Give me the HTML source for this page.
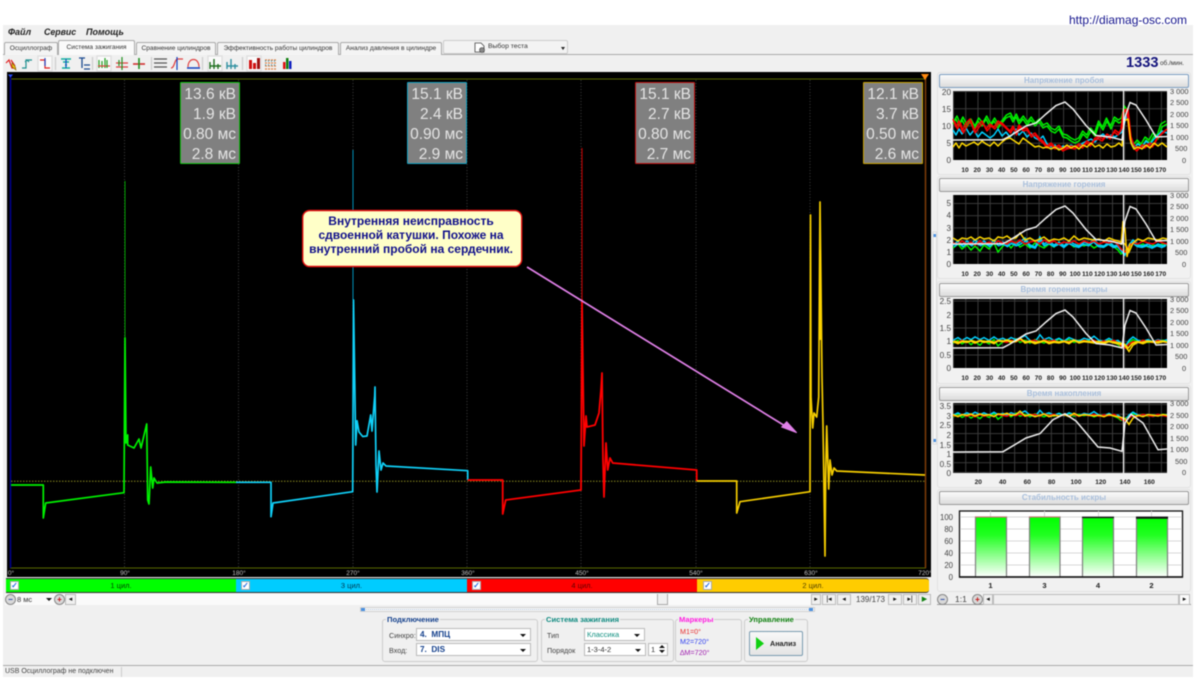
<!DOCTYPE html>
<html lang="ru"><head><meta charset="utf-8"><title>Diamag</title>
<style>
html,body{margin:0;padding:0;background:#fff;width:1200px;height:680px;overflow:hidden}
#w{position:relative;width:1200px;height:680px;overflow:hidden;filter:blur(.5px);font-family:"Liberation Sans",sans-serif;color:#333}
.a{position:absolute;white-space:nowrap;box-sizing:border-box}
.tab{top:42px;height:13px;background:#f4f4f4;border:1px solid #aaa;border-bottom:none;font-size:6.6px;line-height:12px;text-align:center;border-radius:2px 2px 0 0;color:#333}
.hd{left:939px;width:250px;height:14px;background:linear-gradient(#fbfbfb,#dcdcdc);border:1px solid #999;border-radius:2px;text-align:center;font-size:8px;font-weight:bold;line-height:12px;color:#a9bfdc}
.pn{left:937px;width:254px;background:#f1f1f1;border:1px solid #e2e2e2;border-radius:3px}
.grp{top:619px;height:43px;border:1px solid #ccc;border-radius:3px}
.gt{top:615px;font-size:7.6px;font-weight:bold;background:#f0f0f0;padding:0 1px;line-height:9px}
.cb{background:#fff;border:1px solid #bbb;height:13px;font-size:7.5px;line-height:11px;padding-left:2px}
.cb i{position:absolute;right:4px;top:4.5px;width:0;height:0;border:3px solid transparent;border-top:3px solid #111;border-bottom:none}
.lb{font-size:7.2px;color:#444}
.st{top:578px;height:15px;border-top:1px solid #333;border-bottom:1px solid #333;font-size:7.5px;line-height:13px;text-align:center}
.ck{top:581px;width:9px;height:9px;background:#fff;border:1px solid #aaa;color:#2a6fe0;font-size:8px;line-height:7px;text-align:center;font-weight:bold}
.btn{top:594px;height:11px;background:#f0f0f0;border:1px solid #bbb;font-size:7px;line-height:9px;text-align:center;color:#111}
.rd{background:#d8d8d8;border:1px solid #888;border-radius:6px;font-weight:bold;font-size:8px}
.info{top:82px;width:60px;height:82px;background:#808080;border:1px solid;border-radius:1px;color:#e4e4e4;font-size:15.5px;line-height:20px;text-align:right;padding:2px 3px 0 0}
</style></head><body><div id="w">

<div class="a" style="left:3px;top:25px;width:1190px;height:652px;background:#f0f0f0"></div>
<div class="a" style="left:1069px;top:13px;font-size:12px;color:#14148c">http://diamag-osc.com</div>
<div class="a" style="left:8px;top:27px;font-size:9px;font-weight:bold;font-style:italic;color:#222">Файл</div>
<div class="a" style="left:44px;top:27px;font-size:8.8px;font-weight:bold;font-style:italic;color:#222">Сервис</div>
<div class="a" style="left:86px;top:27px;font-size:9px;font-weight:bold;font-style:italic;color:#222">Помощь</div>

<div class="a" style="left:3px;top:54px;width:1190px;height:1px;background:#aaa"></div>
<div class="a tab" style="left:4px;width:54px">Осциллограф</div>
<div class="a tab" style="left:58px;width:77px;top:40px;height:15px;background:#fafafa;line-height:13px">Система зажигания</div>
<div class="a tab" style="left:136px;width:80px">Сравнение цилиндров</div>
<div class="a tab" style="left:217px;width:122px">Эффективность работы цилиндров</div>
<div class="a tab" style="left:340px;width:102px">Анализ давления в цилиндре</div>
<div class="a" style="left:443px;top:40px;width:125px;height:14px;background:#f3f3f3;border:1px solid #ccc;border-radius:2px"></div>
<div class="a" style="left:488px;top:43px;font-size:6.8px;color:#333">Выбор теста</div>
<div class="a" style="left:561px;top:47px;width:0;height:0;border:2px solid transparent;border-top:3px solid #222"></div>

<div class="a" style="left:1126px;top:54px;font-size:14.6px;font-weight:bold;color:#14147c;line-height:18px">1333</div>
<div class="a" style="left:1160px;top:60px;font-size:6.4px;color:#333">об./мин.</div>

<svg class="a" style="left:0;top:0" width="1200" height="680" viewBox="0 0 1200 680">
<defs>
<pattern id="g1" width="12.23" height="17.25" patternUnits="userSpaceOnUse"><path d="M.5 0V18M0 .5H13" stroke="#3a3a3a" fill="none"/></pattern>
<pattern id="g2" width="12.23" height="12.2" y="8" patternUnits="userSpaceOnUse"><path d="M.5 0V13M0 .5H13" stroke="#3a3a3a" fill="none"/></pattern>
<pattern id="g3" width="12.23" height="13.5" y="1.5" patternUnits="userSpaceOnUse"><path d="M.5 0V14M0 .5H13" stroke="#3a3a3a" fill="none"/></pattern>
<pattern id="g4" width="12.23" height="9.7" y="1" patternUnits="userSpaceOnUse"><path d="M.5 0V10M0 .5H13" stroke="#3a3a3a" fill="none"/></pattern>
<linearGradient id="bar" x1="0" y1="0" x2="0" y2="1"><stop offset="0" stop-color="#00ff00"/><stop offset=".3" stop-color="#20ff20"/><stop offset="1" stop-color="#ffffff"/></linearGradient>
<polyline id="rpm" fill="none" stroke="#eee" stroke-width="1.5" points="0,49 50,48.7 57,45 73,35 83,32 93,23 103,14.5 112,11 120,18 133,34.5 143,44.5 157,46 169,49 172,26 177,11.5 183,14 193,29 203,46 214,45.5"/>
<polyline id="n1" fill="none" stroke="#00f000" stroke-width="1.5" vector-effect="non-scaling-stroke" points="0,3 5,-1 9,4 14,0 18,5 22,1 27,6 31,0 36,4 41,-2 45,7 50,1 54,-2 58,3 63,-3 67,2 72,-1 77,3 82,-2 87,1 91,3 96,-1 101,2 106,-3 111,1 116,-2 121,2 126,-1 131,1 136,-1 141,3 146,0 151,2 156,-1 161,2 165,5 168,9 172,6 176,2 180,-2 185,1 190,-1 195,2 200,0 205,1 210,-1 214,0"/>
<polyline id="n2" fill="none" stroke="#f80000" stroke-width="1.5" vector-effect="non-scaling-stroke" points="0,1 5,2 9,-1 14,2 18,0 22,3 27,-1 31,2 36,0 41,2 45,-1 50,1 54,2 58,-1 63,1 67,-2 72,2 77,0 82,-1 87,2 91,-2 96,1 101,-1 106,2 111,0 116,1 121,-1 126,2 131,-1 136,1 141,-1 146,2 151,0 156,1 161,-1 165,3 168,7 172,10 176,4 180,1 185,2 190,-1 195,1 200,2 205,-1 210,1 214,2"/>
<polyline id="n3" fill="none" stroke="#00d0ff" stroke-width="1.5" vector-effect="non-scaling-stroke" points="0,2 5,-2 9,2 14,-2 18,1 22,-3 27,1 31,-2 36,2 41,-3 45,1 50,-1 54,2 58,-2 63,1 67,-1 72,-5 77,2 82,4 87,-6 91,1 96,-2 101,2 106,-1 111,3 116,-2 121,1 126,3 131,-1 136,1 141,-4 146,2 151,3 156,-1 161,3 165,2 168,6 172,12 176,2 180,-3 185,2 190,3 195,1 200,4 205,1 210,3 214,1"/>
<polyline id="n4" fill="none" stroke="#ffd800" stroke-width="1.5" vector-effect="non-scaling-stroke" points="0,-2 5,1 9,-2 14,-1 18,-3 22,0 27,-3 31,-1 36,-2 41,1 45,-3 50,-2 54,-4 58,-1 63,-2 67,-7 72,0 77,-2 82,1 87,-1 91,-3 96,1 101,-1 106,0 111,-2 116,1 121,-4 126,0 131,-2 136,-1 141,0 146,-1 151,1 156,-2 161,0 165,1 168,2 172,4 176,12 180,3 185,-1 190,1 195,-2 200,-1 205,0 210,-2 214,-1"/>
<polyline id="c1g" fill="none" stroke="#00f000" stroke-width="1.5" stroke-linejoin="round" points="0,33 3,28 6,35 9,29 13,37 17,31 21,38 25,30 29,35 33,28 37,36 41,30 45,37 49,32 53,27 57,25 60,31 63,26 66,33 70,28 74,34 78,29 82,35 86,31 90,37 94,35 98,40 102,42 106,38 110,46 114,47 118,50 122,52 126,50 130,43 134,47 138,40 142,45 146,33 150,39 154,30 158,38 162,29 166,32 169,30 172,18 175,22 178,48 181,57 185,52 189,56 193,49 197,52 201,45 205,48 209,36 214,33"/>
<polyline id="c1b" fill="none" stroke="#00d0ff" stroke-width="1.5" stroke-linejoin="round" points="0,39 3,44 6,38 9,43 13,37 17,44 21,39 25,46 29,41 33,44 37,47 41,44 45,38 49,45 53,41 57,46 60,43 63,38 66,44 70,40 74,46 78,42 82,47 86,49 90,45 94,53 98,56 102,54 106,58 110,55 114,57 118,54 122,56 126,55 130,52 134,50 138,48 142,51 146,46 150,43 154,47 158,44 162,46 166,43 169,41 172,30 175,22 178,50 181,56 185,53 189,56 193,50 197,53 201,48 205,44 209,40 214,42"/>
<polyline id="c1r" fill="none" stroke="#f80000" stroke-width="1.5" stroke-linejoin="round" points="0,28 3,36 6,30 9,40 13,32 17,28 21,40 25,34 29,30 33,38 37,33 41,36 45,30 49,32 53,36 57,40 60,35 63,42 66,34 70,38 74,37 78,44 82,42 86,47 90,50 94,55 98,52 102,56 106,54 110,58 114,56 118,55 122,56 126,53 130,55 134,50 138,53 142,47 146,46 150,48 154,43 158,46 162,39 166,42 169,37 171,19 175,18 178,46 181,54 185,58 189,54 193,55 197,52 201,54 205,46 209,42 214,38"/>
<polyline id="c1y" fill="none" stroke="#ffd800" stroke-width="1.5" stroke-linejoin="round" points="0,56 3,52 6,57 9,52 13,55 17,53 21,51 25,54 29,50 33,53 37,55 41,51 45,55 49,51 53,48 57,47 60,49 63,51 66,53 70,47 74,50 78,53 82,56 86,55 90,57 94,56 98,58 102,56 106,59 110,57 114,54 118,57 122,55 126,58 130,54 134,56 138,52 142,56 146,54 150,57 154,53 158,56 162,55 166,52 169,55 171,30 175,28 178,52 181,58 185,56 189,58 193,54 197,57 201,52 205,55 209,52 214,56"/>
</defs>

<!-- scope -->
<rect x="7" y="72" width="924" height="505" fill="#000"/>
<g stroke="#3d3d3d" stroke-dasharray="1 2"><path d="M124.5 80V568M238.5 80V568M353 80V568M467 80V568M581 80V568M696 80V568M810 80V568"/></g>
<path d="M10 79H926M10 568H926" stroke="#5a6a00" fill="none"/>
<path d="M10.5 76V568" stroke="#00008c" stroke-width="1.6"/>
<path d="M925.5 78V568" stroke="#7a3a08" stroke-width="1.6"/>
<path d="M8 74.5h5l-2.5 3z" fill="#2a50ff"/>
<path d="M921 74h8l-4 6z" fill="#ff8a10"/>
<path d="M11 481.3H925" stroke="#8a8a20" stroke-dasharray="1.5 1.5"/>

<g fill="none" stroke-linejoin="round">
<path d="M125 181V340" stroke="#00a000" stroke-width="1"/>
<path d="M11 485H43.3V518L45.7 503L124 492.7L125 338L126 443L127.7 435V445L134 448L139 439L141 448L146.7 424L147.7 500L149 504L150.7 467L152.7 488L154 478L157 483L166 482L236 482.3" stroke="#00f000" stroke-width="1.7"/>
<path d="M353 150V300" stroke="#0090b8" stroke-width="1"/>
<path d="M236 482.3H271V516.7L273 503L352.7 491.7L353.5 300L355.7 445L357 420.7L359 432L362.7 436.5L367 436L370.7 415L372 431L374.7 396L375 387L376 465L377 492L379 451L381 470L383 463L386 466L467.7 470.7V480" stroke="#10d0f8" stroke-width="1.7"/>
<path d="M582 148V300" stroke="#c00000" stroke-width="1.1"/>
<path d="M467.7 480H502.7V514L505.7 500L581 490L582 300L584 446L586 416L587 427L595 425L599 413L601 390L602 373L603 460L604 497L606 443L607.7 470L610 458L612.7 463L696.7 470V481" stroke="#ff0000" stroke-width="1.8"/>
<path d="M696.7 481H736.7V513L740 501.7L810 491.7L810.5 215L811 397L812.7 428L814 413L816.7 417L818.7 397L820 202L822 377L823 425L825 556L825.7 470L826.7 426L828.7 489L830 460L832 475L834 468L836.7 471L925 475" stroke="#f4cc00" stroke-width="1.7"/>
<path d="M820 250V340M810.5 350V400" stroke="#ffd400" stroke-width="2"/>
</g>

<path d="M527 267L790 429" stroke="#e080e8" stroke-width="1.7"/>
<path d="M796.7 432.7L781.7 427L786.7 421.7z" fill="#e080e8" stroke="#e080e8"/>

<rect x="302.7" y="210.5" width="219" height="56" rx="7" fill="#ffffc8" stroke="#e41010" stroke-width="1.4"/>
<g font-family="Liberation Sans" font-size="12" font-weight="bold" fill="#10108a" text-anchor="middle">
<text x="411" y="225">Внутренняя неисправность</text>
<text x="411" y="239">сдвоенной катушки. Похоже на</text>
<text x="411" y="253">внутренний пробой на сердечник.</text>
</g>

<g font-family="Liberation Sans" font-size="6.5" fill="#c0c0c0" text-anchor="middle">
<text x="11" y="575">0°</text><text x="125" y="575">90°</text><text x="239" y="575">180°</text><text x="353" y="575">270°</text><text x="468" y="575">360°</text><text x="582" y="575">450°</text><text x="696" y="575">540°</text><text x="811" y="575">630°</text><text x="925" y="575">720°</text>
</g>

<!-- toolbar icons -->
<g fill="none" stroke-width="1.2">
<rect x="38" y="56" width="14" height="15" fill="#fafafa" stroke="#ddd"/>
<rect x="97" y="56" width="14" height="15" fill="#fafafa" stroke="#ddd"/>
<rect x="208" y="56" width="14" height="15" fill="#fafafa" stroke="#ddd"/>
<rect x="247" y="56" width="14" height="15" fill="#fafafa" stroke="#ddd"/>
<path d="M55.5 57V70M92.5 57V70M151.5 57V70M202.5 57V70M242.5 57V70" stroke="#ccc"/>
<path d="M6 63L9 60L12 68H16M11 60L15 66" stroke="#e02020"/><path d="M12 63l3 3 1 4-4-3z" fill="#e8c010" stroke="#806000" stroke-width=".6"/>
<path d="M22 68H26V60H32M27 60l-2 2M27 60l2 2" stroke="#209090"/>
<path d="M40 60H45V68H50" stroke="#e02020"/><path d="M45 58V66" stroke="#2040c0"/>
<path d="M61 59H71M63 62H69M65 65H67M62 68H70" stroke="#10b0a0" stroke-width="1.6"/><path d="M66 59V68" stroke="#1050c0"/>
<path d="M79 58H85M82 58V68M84 65H90M84 69H90" stroke="#1a4a90" stroke-width="1.3"/>
<path d="M99 68V60M102 68V61M105 68V58" stroke="#20a020"/><path d="M98 66H110" stroke="#e04040"/><path d="M107 68V60" stroke="#20a020"/>
<path d="M116 63H128M116 67H128" stroke="#e04040"/><path d="M122 57V70M119 60V66" stroke="#209020"/>
<path d="M133 64H145" stroke="#d03030" stroke-width="1.6"/><path d="M139 58V69" stroke="#209020" stroke-width="1.6"/>
<path d="M154 59H167M154 63H167M154 67H167" stroke="#555"/>
<path d="M171 68C175 68 174 59 178 59H183" stroke="#e04040"/><path d="M177 57V70" stroke="#1040c0"/>
<path d="M188 67C188 57 199 57 199 67" stroke="#e04040"/><path d="M187 68H200" stroke="#1040c0" stroke-width="1.5"/>
<path d="M210 69V62M214 69V59M218 69V64M210 66H221" stroke="#207020" stroke-width="1.4"/>
<path d="M227 69V62M231 69V59M235 69V64M227 66H238" stroke="#3090a0" stroke-width="1.4"/>
<rect x="249" y="60" width="3" height="9" fill="#d01010"/><rect x="253" y="63" width="3" height="6" fill="#d01010"/><rect x="257" y="58" width="3" height="11" fill="#a01010"/>
<path d="M265 60H277M265 63H277M265 66H277M265 69H277" stroke="#e08040" stroke-dasharray="2 1"/><path d="M265 61H277M265 65H277" stroke="#3090b0" stroke-dasharray="1 2"/>
<rect x="283" y="62" width="2.5" height="7" fill="#e01010"/><rect x="286" y="58" width="2.5" height="11" fill="#108010"/><rect x="289" y="61" width="2.5" height="8" fill="#1020c0"/>
<path d="M475 43h6l3 3v6h-9z" fill="#fff" stroke="#444" stroke-width=".8"/><circle cx="482" cy="50" r="2.5" fill="#888" stroke="#444" stroke-width=".6"/>
</g>
</svg>

<div class="a info" style="left:180px;border-color:#10c010">13.6 кВ<br>1.9 кВ<br>0.80 мс<br>2.8 мс</div>
<div class="a info" style="left:407px;border-color:#10a0c0">15.1 кВ<br>2.4 кВ<br>0.90 мс<br>2.9 мс</div>
<div class="a info" style="left:635px;border-color:#c01010">15.1 кВ<br>2.7 кВ<br>0.80 мс<br>2.7 мс</div>
<div class="a info" style="left:863px;border-color:#c8a000">12.1 кВ<br>3.7 кВ<br>0.50 мс<br>2.6 мс</div>

<!-- strips -->
<div class="a st" style="left:6px;width:230px;background:#00ff00;color:#004400">1 цил.</div>
<div class="a st" style="left:236px;width:231px;background:#00ccff;color:#003850">3 цил.</div>
<div class="a st" style="left:467px;width:230px;background:#ff0000;color:#600000">4 цил.</div>
<div class="a st" style="left:697px;width:232px;background:#ffcc00;color:#504000;border-radius:0 3px 3px 0">2 цил.</div>
<div class="a ck" style="left:10px">✓</div><div class="a ck" style="left:241px">✓</div><div class="a ck" style="left:472px">✓</div><div class="a ck" style="left:703px">✓</div>

<!-- scope scrollbar -->
<div class="a" style="left:5px;top:594px;width:810px;height:11px;background:#fafafa"></div>
<div class="a btn rd" style="left:5px;width:11px;color:#2040a0">−</div>
<div class="a" style="left:17px;top:594px;font-size:7.5px;line-height:11px;color:#333">8 мс</div>
<div class="a" style="left:46px;top:598px;width:0;height:0;border:3px solid transparent;border-top:3px solid #111;border-bottom:none"></div>
<div class="a btn rd" style="left:54px;width:11px;color:#c01010">+</div>
<div class="a btn" style="left:65px;width:11px">◂</div>
<div class="a" style="left:657px;top:594px;width:11px;height:11px;background:#f0f0f0;border:1px solid #aaa;border-top:none"></div>
<div class="a btn" style="left:811px;width:10px">▸</div>
<div class="a btn" style="left:822px;width:14px">|◂</div>
<div class="a btn" style="left:837px;width:14px">◂</div>
<div class="a" style="left:856px;top:594px;font-size:8px;line-height:11px;color:#444">139/173</div>
<div class="a btn" style="left:888px;width:14px">▸</div>
<div class="a btn" style="left:903px;width:14px">▸|</div>
<div class="a btn" style="left:918px;width:13px;color:#108010">▶</div>

<!-- right panels -->
<div class="a pn" style="top:72px;height:103px"></div>
<div class="a pn" style="top:176px;height:103px"></div>
<div class="a pn" style="top:281px;height:103px"></div>
<div class="a pn" style="top:385px;height:103px"></div>
<div class="a pn" style="top:489px;height:103px"></div>
<div class="a hd" style="top:74px;border-color:#7a9cc0">Напряжение пробоя</div>
<div class="a hd" style="top:178px">Напряжение горения</div>
<div class="a hd" style="top:283px">Время горения искры</div>
<div class="a hd" style="top:387px">Время накопления</div>
<div class="a hd" style="top:491px">Стабильность искры</div>

<svg class="a" style="left:0;top:0" width="1200" height="680" viewBox="0 0 1200 680">
<!-- chart 1 -->
<g transform="translate(953,91)"><rect width="214" height="69" fill="#000"/><rect width="214" height="69" fill="url(#g1)"/>
<use href="#c1g"/><use href="#c1g" transform="translate(1,-3) scale(.99,1)"/>
<use href="#c1b"/>
<use href="#c1r"/><use href="#c1r" transform="translate(1.5,2) scale(.985,1)"/>
<use href="#c1y"/>
<use href="#rpm"/><path d="M170.5 0V69" stroke="#fff" stroke-width="1.2"/></g>
<!-- chart 2 -->
<g transform="translate(953,195)"><rect width="214" height="69" fill="#000"/><rect width="214" height="69" fill="url(#g2)"/>
<use href="#n1" transform="translate(0,50)"/><use href="#n3" transform="translate(0,48)"/><use href="#n3" transform="translate(1,50) scale(.99,.8)"/><use href="#n2" transform="translate(0,47)"/><use href="#n4" transform="translate(0,45)"/>
<path d="M168 50L170 26L172 34L174 62L177 48" fill="none" stroke="#ffd000" stroke-width="1.4"/>
<use href="#rpm"/><path d="M170.5 0V69" stroke="#fff" stroke-width="1.2"/></g>
<!-- chart 3 -->
<g transform="translate(953,299)"><rect width="214" height="69" fill="#000"/><rect width="214" height="69" fill="url(#g3)"/>
<use href="#n1" transform="translate(0,42) scale(1,.7)"/><use href="#n3" transform="translate(0,40) scale(1,.7)"/><use href="#n2" transform="translate(0,42) scale(1,.7)"/><use href="#n4" transform="translate(0,44) scale(1,.7)"/><use href="#n4" transform="translate(1,43) scale(.99,.5)"/>
<use href="#rpm"/><path d="M170.5 0V69" stroke="#fff" stroke-width="1.2"/></g>
<!-- chart 4 -->
<g transform="translate(953,403)"><rect width="214" height="70" fill="#000"/><rect width="214" height="70" fill="url(#g4)"/>
<use href="#n1" transform="translate(0,12) scale(1,.6)"/><use href="#n3" transform="translate(0,11) scale(1,.6)"/><use href="#n2" transform="translate(0,12) scale(1,.6)"/><use href="#n4" transform="translate(0,13) scale(1,.7)"/>
<polyline fill="none" stroke="#eee" stroke-width="1.5" points="0,49 50,48.7 73,35 87,30.6 100,16.7 112,10.7 123,18 145,44 157,45 169,48.3 172,20 178,11.3 190,20 205,46.7 214,46"/>
<path d="M170.5 0V70" stroke="#fff" stroke-width="1.2"/></g>

<g font-family="Liberation Sans" font-size="8.2" fill="#444" text-anchor="end">
<text x="951" y="95">20</text><text x="951" y="112">15</text><text x="951" y="129">10</text><text x="951" y="146">5</text><text x="951" y="163">0</text>
<text x="951" y="206">5</text><text x="951" y="218">4</text><text x="951" y="231">3</text><text x="951" y="243">2</text><text x="951" y="255">1</text><text x="951" y="267">0</text>
<text x="951" y="304">2.5</text><text x="951" y="318">2</text><text x="951" y="331">1.5</text><text x="951" y="344">1</text><text x="951" y="358">0.5</text><text x="951" y="371">0</text>
<text x="951" y="409">3.5</text><text x="951" y="419">3</text><text x="951" y="428">2.5</text><text x="951" y="438">2</text><text x="951" y="448">1.5</text><text x="951" y="457">1</text><text x="951" y="467">0.5</text><text x="951" y="476">0</text>
</g>
<g font-family="Liberation Sans" font-size="7.4" fill="#444">
<text x="1170" y="94">3 000</text><text x="1170" y="105">2 500</text><text x="1170" y="117">2 000</text><text x="1170" y="128">1 500</text><text x="1170" y="140">1 000</text><text x="1175" y="151">500</text><text x="1182" y="163">0</text>
<text x="1170" y="198">3 000</text><text x="1170" y="209">2 500</text><text x="1170" y="221">2 000</text><text x="1170" y="232">1 500</text><text x="1170" y="244">1 000</text><text x="1175" y="255">500</text><text x="1182" y="267">0</text>
<text x="1170" y="302">3 000</text><text x="1170" y="313">2 500</text><text x="1170" y="325">2 000</text><text x="1170" y="336">1 500</text><text x="1170" y="348">1 000</text><text x="1175" y="359">500</text><text x="1182" y="371">0</text>
<text x="1170" y="406">3 000</text><text x="1170" y="418">2 500</text><text x="1170" y="429">2 000</text><text x="1170" y="441">1 500</text><text x="1170" y="452">1 000</text><text x="1175" y="464">500</text><text x="1182" y="475">0</text>
</g>
<g font-family="Liberation Sans" font-size="6.6" font-weight="bold" fill="#222" text-anchor="middle">
<text x="965" y="172">10</text><text x="977.2" y="172">20</text><text x="989.5" y="172">30</text><text x="1001.7" y="172">40</text><text x="1013.9" y="172">50</text><text x="1026.2" y="172">60</text><text x="1038.4" y="172">70</text><text x="1050.6" y="172">80</text><text x="1062.8" y="172">90</text><text x="1075.1" y="172">100</text><text x="1087.3" y="172">110</text><text x="1099.5" y="172">120</text><text x="1111.8" y="172">130</text><text x="1124" y="172">140</text><text x="1136.2" y="172">150</text><text x="1148.5" y="172">160</text><text x="1160.7" y="172">170</text>
<text x="965" y="276">10</text><text x="977.2" y="276">20</text><text x="989.5" y="276">30</text><text x="1001.7" y="276">40</text><text x="1013.9" y="276">50</text><text x="1026.2" y="276">60</text><text x="1038.4" y="276">70</text><text x="1050.6" y="276">80</text><text x="1062.8" y="276">90</text><text x="1075.1" y="276">100</text><text x="1087.3" y="276">110</text><text x="1099.5" y="276">120</text><text x="1111.8" y="276">130</text><text x="1124" y="276">140</text><text x="1136.2" y="276">150</text><text x="1148.5" y="276">160</text><text x="1160.7" y="276">170</text>
<text x="965" y="380">10</text><text x="977.2" y="380">20</text><text x="989.5" y="380">30</text><text x="1001.7" y="380">40</text><text x="1013.9" y="380">50</text><text x="1026.2" y="380">60</text><text x="1038.4" y="380">70</text><text x="1050.6" y="380">80</text><text x="1062.8" y="380">90</text><text x="1075.1" y="380">100</text><text x="1087.3" y="380">110</text><text x="1099.5" y="380">120</text><text x="1111.8" y="380">130</text><text x="1124" y="380">140</text><text x="1136.2" y="380">150</text><text x="1148.5" y="380">160</text><text x="1160.7" y="380">170</text>
<text x="978.3" y="484">20</text><text x="1002.7" y="484">40</text><text x="1027.3" y="484">60</text><text x="1051.7" y="484">80</text><text x="1076" y="484">100</text><text x="1100.7" y="484">120</text><text x="1125" y="484">140</text><text x="1149.3" y="484">160</text>
</g>

<!-- bar chart -->
<rect x="959.5" y="511" width="223" height="66" fill="#fff" stroke="#111" stroke-width="1.3"/>
<path d="M960 517H1182M960 529H1182M960 541H1182M960 553H1182M960 565H1182M990.5 511V577M1044.5 511V577M1098.5 511V577M1151.5 511V577" stroke="#d8d8d8"/>
<g stroke="#808080" stroke-width="1.2" fill="url(#bar)">
<rect x="975.5" y="517" width="31" height="60"/><rect x="1029.5" y="517" width="30.5" height="60"/><rect x="1082.5" y="517" width="31" height="60"/><rect x="1136.5" y="517" width="31" height="60"/>
</g>
<path d="M975 517H1007M1029 517H1060" stroke="#d07070"/><path d="M1082 517.5H1114" stroke="#111" stroke-width="1.3"/><path d="M1136 517.8H1168" stroke="#111" stroke-width="2"/>
<path d="M959 577H1183" stroke="#111" stroke-width="1.5"/>
<g font-family="Liberation Sans" font-size="7.8" fill="#444" text-anchor="end">
<text x="953" y="520">100</text><text x="953" y="532">80</text><text x="953" y="544">60</text><text x="953" y="556">40</text><text x="953" y="568">20</text><text x="953" y="580">0</text>
</g>
<g font-family="Liberation Sans" font-size="7.6" font-weight="bold" fill="#222" text-anchor="middle">
<text x="990.5" y="588">1</text><text x="1044.5" y="588">3</text><text x="1098" y="588">4</text><text x="1151.5" y="588">2</text>
</g>
<!-- splitters -->
<rect x="933" y="232" width="3.5" height="212" fill="#f6f6f6" stroke="#ccc" stroke-width=".6"/>
<rect x="933.5" y="234" width="2.5" height="3" fill="#4a90e0"/><rect x="933.5" y="439" width="2.5" height="3" fill="#4a90e0"/>
<rect x="360.5" y="607.5" width="454" height="4" fill="#f6f6f6" stroke="#bbb" stroke-width=".6"/>
<path d="M362 609.5H812" stroke="#b8cce0" stroke-dasharray="1 1"/>
<rect x="361" y="608" width="4" height="3" fill="#4a90e0"/><rect x="809" y="608" width="4" height="3" fill="#4a90e0"/>
</svg>

<!-- right bottom bar -->
<div class="a" style="left:937px;top:604px;width:254px;height:1px;background:#999"></div>
<div class="a btn rd" style="left:937px;width:11px;color:#2040a0">−</div>
<div class="a" style="left:955px;top:594px;font-size:8.5px;line-height:11px;color:#444">1:1</div>
<div class="a btn rd" style="left:972px;width:11px;color:#c01010">+</div>
<div class="a btn" style="left:983px;width:10px">◂</div>
<div class="a btn" style="left:993px;width:186px"></div>
<div class="a btn" style="left:1179px;width:11px;background:#fafafa">▸</div>

<!-- bottom controls -->
<div class="a grp" style="left:382px;width:156px"></div>
<div class="a grp" style="left:541px;width:133px"></div>
<div class="a grp" style="left:675px;width:67px"></div>
<div class="a grp" style="left:744px;width:64px"></div>
<div class="a gt" style="left:386px;color:#14408c">Подключение</div>
<div class="a gt" style="left:545px;color:#108a80">Система зажигания</div>
<div class="a gt" style="left:678px;color:#ff20e0">Маркеры</div>
<div class="a gt" style="left:748px;color:#108010">Управление</div>
<div class="a lb" style="left:389px;top:631px">Синхро:</div>
<div class="a lb" style="left:389px;top:646px">Вход:</div>
<div class="a cb" style="left:416px;top:628px;width:115px;font-weight:bold;color:#14408c;font-size:8.2px;padding-left:3px">4.&nbsp; МПЦ<i></i></div>
<div class="a cb" style="left:416px;top:643px;width:115px;font-weight:bold;color:#14408c;font-size:8.2px;padding-left:3px">7.&nbsp; DIS<i></i></div>
<div class="a lb" style="left:547px;top:631px">Тип</div>
<div class="a lb" style="left:547px;top:646px">Порядок</div>
<div class="a cb" style="left:584px;top:628px;width:61px;color:#109080">Классика<i></i></div>
<div class="a cb" style="left:584px;top:643px;width:62px">1-3-4-2<i></i></div>
<div class="a cb" style="left:648px;top:643px;width:20px">1</div>
<div class="a" style="left:659px;top:645px;width:0;height:0;border:3px solid transparent;border-bottom:3px solid #111;border-top:none"></div>
<div class="a" style="left:659px;top:650px;width:0;height:0;border:3px solid transparent;border-top:3px solid #111;border-bottom:none"></div>
<div class="a" style="left:680px;top:627px;font-size:7.2px;color:#e83030">M1=0°</div>
<div class="a" style="left:680px;top:637px;font-size:7.2px;color:#3040f0">M2=720°</div>
<div class="a" style="left:680px;top:648px;font-size:7.2px;color:#a020b0">∆M=720°</div>
<div class="a" style="left:749px;top:631px;width:54px;height:25px;background:linear-gradient(#f8f8f8,#e4e4e4);border:1px solid #7a9cb0;border-radius:2px"></div>
<svg class="a" style="left:749px;top:631px" width="54" height="25"><path d="M7 6l8 6.5-8 6.5z" fill="#10d010"/></svg>
<div class="a" style="left:770px;top:639px;font-size:7.2px;font-weight:bold;color:#222">Анализ</div>

<!-- status bar -->
<div class="a" style="left:3px;top:665px;width:1190px;height:1px;background:#aaa"></div>
<div class="a" style="left:5px;top:668px;font-size:7px;color:#444">USB Осциллограф не подключен</div>
<div class="a" style="left:121px;top:667px;width:1px;height:10px;background:#ccc"></div>
</div></body></html>
